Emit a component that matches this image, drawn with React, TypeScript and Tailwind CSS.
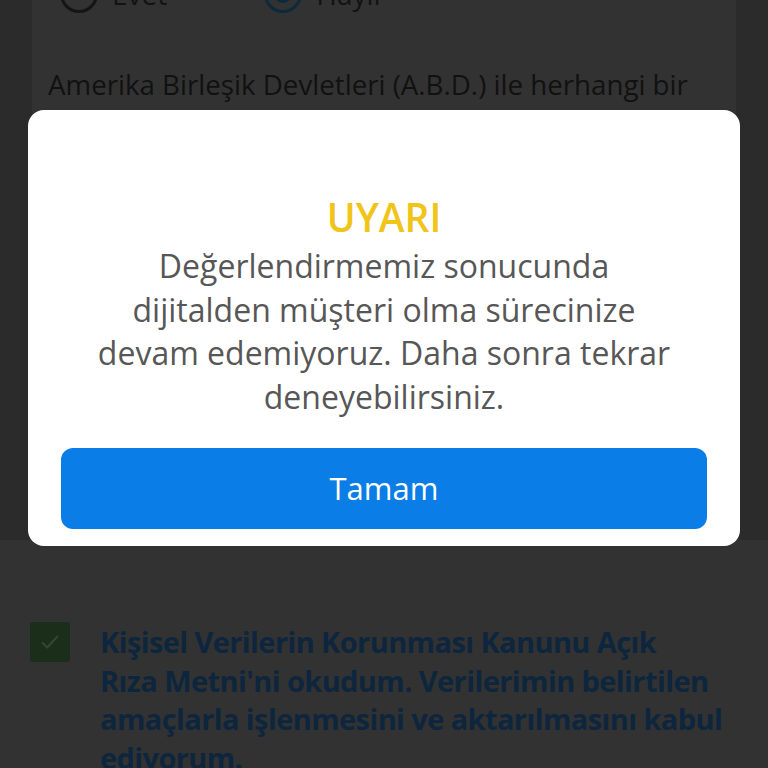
export default function App() {
  return (
    <div className="relative h-[768px] w-[768px] overflow-hidden bg-[#323232] font-['Open_Sans',sans-serif]">
      {/* dimmed page behind the dialog */}
      <div className="bg-[#2b2b2b]">
        <div className="mx-[32px] -mt-[27px] h-[567px] bg-[#323232] pl-[28px] pr-[16px]">
          <div className="flex items-center gap-[97px]">
            <div className="flex items-center gap-[14px]">
              <span className="h-[38px] w-[38px] rounded-full border-[3px] border-[#151515]" />
              <span className="text-[28px] text-[#121212]">Evet</span>
            </div>
            <div className="flex items-center gap-[14px]">
              <span className="flex h-[38px] w-[38px] items-center justify-center rounded-full border-[3px] border-[#0b2a3c]">
                <span className="h-[18px] w-[18px] rounded-full bg-[#0b2a3c]" />
              </span>
              <span className="text-[28px] text-[#121212]">Hayır</span>
            </div>
          </div>
          <p className="-ml-[12px] mt-[50px] whitespace-nowrap text-[27.7px] leading-[38px] text-[#111111]">
            Amerika Birleşik Devletleri (A.B.D.) ile herhangi bir
          </p>
        </div>
      </div>

      <div className="mt-[83px] flex gap-[30px] pl-[30px] pr-[20px]">
        <div className="-mt-[1px] flex h-[40px] w-[40px] shrink-0 items-center justify-center rounded-[3px] bg-[#1a2e1a]">
          <svg width="22" height="22" viewBox="0 0 24 24" fill="none" stroke="#304a30" strokeWidth="2.2" strokeLinecap="round" strokeLinejoin="round">
            <path d="M4 13l5 5L20 6" />
          </svg>
        </div>
        <p className="whitespace-nowrap text-[29px] font-bold leading-[38.5px] tracking-[-0.6px] text-[#0d263d]">
          Kişisel Verilerin Korunması Kanunu Açık
          <br />
          Rıza Metni'ni okudum. Verilerimin belirtilen
          <br />
          amaçlarla işlenmesini ve aktarılmasını kabul
          <br />
          ediyorum.
        </p>
      </div>

      {/* dialog */}
      <div className="absolute left-[28px] top-[110px] w-[712px] rounded-[16px] bg-white px-[33px] pb-[17px] pt-[85px]">
        <h2 className="text-center text-[39px] font-semibold leading-[44px] text-[#f0c419]">UYARI</h2>
        <p className="mx-auto mt-[5px] w-[580px] text-center text-[32px] leading-[43.5px] text-[#575757]">
          Değerlendirmemiz sonucunda dijitalden müşteri olma sürecinize devam edemiyoruz. Daha sonra tekrar deneyebilirsiniz.
        </p>
        <button className="mt-[30px] flex h-[81px] w-full items-center justify-center rounded-[12px] bg-[#0a7de6] text-[31px] text-white">
          Tamam
        </button>
      </div>
    </div>
  );
}
